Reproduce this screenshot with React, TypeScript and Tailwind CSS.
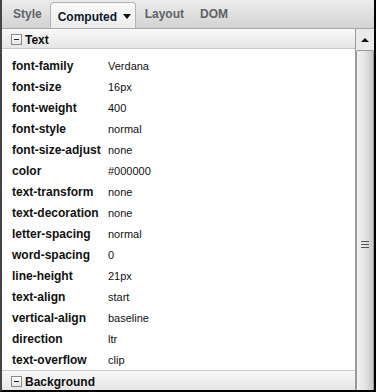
const rows: [string, string][] = [
  ['font-family', 'Verdana'],
  ['font-size', '16px'],
  ['font-weight', '400'],
  ['font-style', 'normal'],
  ['font-size-adjust', 'none'],
  ['color', '#000000'],
  ['text-transform', 'none'],
  ['text-decoration', 'none'],
  ['letter-spacing', 'normal'],
  ['word-spacing', '0'],
  ['line-height', '21px'],
  ['text-align', 'start'],
  ['vertical-align', 'baseline'],
  ['direction', 'ltr'],
  ['text-overflow', 'clip'],
];

function MinusBox() {
  return (
    <span className="flex h-[11px] w-[11px] items-center justify-center border border-[#8a8a8a] bg-gradient-to-b from-white to-[#e4e4e4]">
      <span className="h-px w-[5px] bg-[#222]" />
    </span>
  );
}

function SectionHeader({ title, top }: { title: string; top?: boolean }) {
  return (
    <div
      className={`flex h-[20px] items-center gap-[3px] bg-gradient-to-b from-[#f8f8f8] to-[#e6e6e6] pl-[9px] pt-[2px] ${
        top ? 'border-b border-[#c9c9c9]' : 'border-t border-[#c9c9c9]'
      }`}
    >
      <MinusBox />
      <span className="text-[12px] font-bold text-[#111]">{title}</span>
    </div>
  );
}

export default function App() {
  return (
    <div
      className="flex h-[392px] w-[376px] flex-col overflow-hidden border-b-2 border-l-2 border-r-2 border-b-black border-l-[#444] border-r-black bg-white"
      style={{ fontFamily: "'Liberation Sans', Arial, sans-serif" }}
    >
      {/* Tabs */}
      <div className="flex h-[29px] shrink-0 items-end border-b border-[#a8a8a8] bg-gradient-to-b from-[#ececec] to-[#d3d3d3] pl-[11px] text-[12px] font-bold">
        <span className="mb-[5px] mr-[8px] text-[#5f6368]">Style</span>
        <span className="flex h-[26px] w-[86px] items-center gap-[6px] rounded-t-[4px] border border-b-0 border-[#b4b4b4] bg-gradient-to-b from-[#fafafa] to-[#ececec] pl-[7px] pt-[2px] text-[#10182a]">
          Computed
          <svg width="8" height="5" viewBox="0 0 8 5">
            <path d="M0 0h8L4 5z" fill="#111" />
          </svg>
        </span>
        <span className="mb-[5px] ml-[9px] text-[#5f6368]">Layout</span>
        <span className="mb-[5px] ml-[16px] text-[#5f6368]">DOM</span>
      </div>

      <div className="flex min-h-0 flex-1">
        <div className="flex min-w-0 flex-1 flex-col border-r border-[#9a9a9a]">
          <SectionHeader title="Text" top />
          <div className="flex-1 pt-[6px]">
            {rows.map(([k, v]) => (
              <div key={k} className="flex h-[21px] items-center pl-[10px]">
                <span className="w-[96px] shrink-0 text-[12px] font-bold text-[#111]">{k}</span>
                <span className="pt-[2px] text-[11px] text-[#111]">{v}</span>
              </div>
            ))}
          </div>
          <SectionHeader title="Background" />
        </div>

        {/* Scrollbar */}
        <div className="flex w-[18px] shrink-0 flex-col bg-[#eaeaea]">
          <div className="flex h-[21px] items-center justify-center">
            <svg width="8" height="4" viewBox="0 0 8 4">
              <path d="M0 4h8L4 0z" fill="#111" />
            </svg>
          </div>
          <div className="flex flex-1 items-end justify-center rounded-t-[2px] border border-b-0 border-[#9a9a9a] bg-gradient-to-r from-[#f2f2f2] via-[#e4e4e4] to-[#c8c8c8] pb-[142px]">
            <div className="flex flex-col gap-[2px]">
              <span className="h-px w-[8px] bg-[#555]" />
              <span className="h-px w-[8px] bg-[#555]" />
              <span className="h-px w-[8px] bg-[#555]" />
            </div>
          </div>
        </div>
      </div>
    </div>
  );
}
